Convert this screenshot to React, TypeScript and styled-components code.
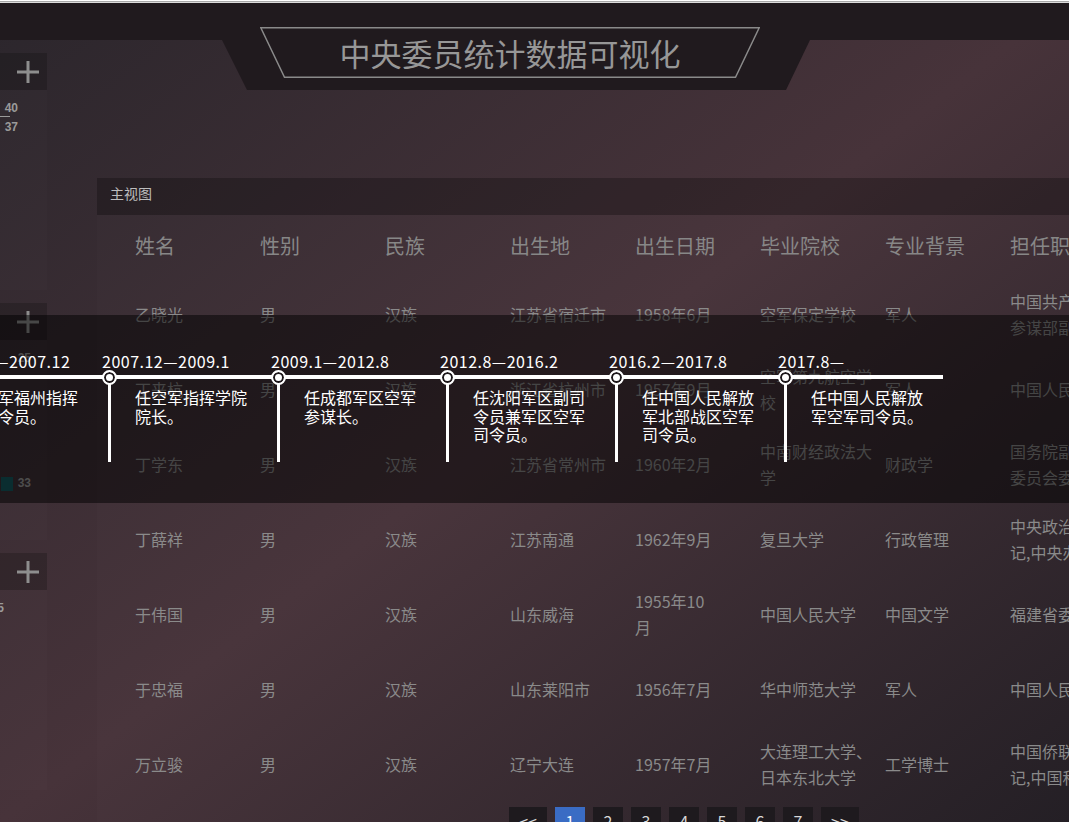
import React from "react";
import styled, { createGlobalStyle } from "styled-components";

const GlobalStyle = createGlobalStyle`
  html, body { margin: 0; padding: 0; width: 100%; height: 100%; overflow: hidden; }
  body { font-family: "Noto Sans CJK SC", "Microsoft YaHei", sans-serif; background: #2b262c; }
  #root { width: 100%; height: 100%; }
  * { box-sizing: border-box; }
`;

const Page = styled.div`
  position: relative;
  width: 100vw;
  height: 100vh;
  overflow: hidden;
  display: flex;
  flex-direction: column;
  background: linear-gradient(to bottom right, #2b262c 0%, #47333a 50%, #221d23 100%);
`;

const TopStrip = styled.div`
  height: 3px;
  flex-shrink: 0;
  background: linear-gradient(#ffffff 0 1px, #a8a8a8 1px 2px, #dcdcdc 2px 3px);
`;

const Header = styled.header`
  height: 37px;
  flex-shrink: 0;
  background: #201a1e;
  padding-left: 222px;
  position: relative;
  z-index: 1;
`;

const TitleTab = styled.div`
  width: 588px;
  height: 87px;
  background: #201a1e;
  clip-path: polygon(0 0, 100% 0, 100% 37px, calc(100% - 24px) 100%, 25px 100%, 0 37px);
  padding: 24px 0 0 38px;
`;

const TitleFrame = styled.div`
  position: relative;
  width: 500px;
  height: 51px;
  display: flex;
  align-items: center;
  justify-content: center;
`;

const FrameSvg = styled.svg`
  position: absolute;
  inset: 0;
`;

const TitleText = styled.h1`
  margin: 0;
  position: relative;
  font-size: 31px;
  font-weight: 400;
  color: #979797;
  line-height: 1;
`;

const Body = styled.div`
  display: flex;
  align-items: flex-start;
  flex: 1;
  min-height: 0;
`;

const LeftColumn = styled.aside`
  width: 247px;
  margin-left: -200px;
  flex-shrink: 0;
  padding-top: 13px;
  display: flex;
  flex-direction: column;
  gap: 13px;
`;

const SidePanel = styled.section`
  height: 237px;
  display: flex;
  flex-direction: column;
  background: rgba(255, 255, 255, 0.012);
`;

const SideHead = styled.div`
  height: 37px;
  flex-shrink: 0;
  background: rgba(0, 0, 0, 0.22);
  display: flex;
  align-items: center;
  justify-content: flex-end;
  padding-right: 8px;
`;

const SideBody = styled.div<{ $pr: number }>`
  display: flex;
  flex-direction: column;
  align-items: flex-end;
  padding: 9px ${(p) => p.$pr}px 0 0;
`;

const SideValue = styled.div<{ $mt?: number; $underline?: boolean }>`
  position: relative;
  display: flex;
  align-items: center;
  gap: 5px;
  margin-top: ${(p) => p.$mt ?? 0}px;
  font-family: "Liberation Sans", "Noto Sans", sans-serif;
  font-size: 12px;
  font-weight: 700;
  line-height: 19px;
  color: #9a9a9a;
  &::before {
    content: "";
    display: ${(p) => (p.$underline ? "block" : "none")};
    position: absolute;
    left: -5px;
    bottom: 1px;
    width: 10px;
    height: 1px;
    background: #9a9a9a;
  }
`;

const Swatch = styled.span`
  width: 12px;
  height: 14px;
  background: #155a60;
`;

const MainPanel = styled.main`
  width: 1174px;
  flex-shrink: 0;
  margin-left: 50px;
  margin-top: 138px;
  background: rgba(255, 255, 255, 0.01);
`;

const PanelBar = styled.div`
  height: 37px;
  line-height: 31px;
  padding-left: 13px;
  font-size: 14px;
  color: #bdbdbd;
  background: rgba(0, 0, 0, 0.28);
`;

const TableGrid = styled.div`
  display: grid;
  grid-template-columns: repeat(7, 125px) 240px;
  padding-left: 38px;
`;

const HeadCell = styled.div`
  height: 61px;
  display: flex;
  align-items: center;
  font-size: 20px;
  color: #878787;
`;

const Cell = styled.div<{ $pr: number }>`
  height: 75px;
  display: flex;
  align-items: center;
  padding-right: ${(p) => p.$pr}px;
  font-size: 16px;
  line-height: 26px;
  color: #8a8a8a;
`;

const Pager = styled.nav`
  display: flex;
  justify-content: center;
  gap: 8px;
  margin-top: 6px;
`;

const PageBtn = styled.span<{ $active?: boolean }>`
  height: 28px;
  min-width: 30px;
  padding: 0 10px;
  display: flex;
  align-items: center;
  justify-content: center;
  font-size: 16px;
  color: ${(p) => (p.$active ? "#ffffff" : "#d8d8d8")};
  background: ${(p) => (p.$active ? "#3a6cc4" : "#1e1a1e")};
`;

const Overlay = styled.div`
  position: absolute;
  top: 315px;
  left: 0;
  right: 0;
  height: 188px;
  background: rgba(0, 0, 0, 0.5);
  z-index: 5;
  overflow: hidden;
`;

const Timeline = styled.div`
  display: flex;
  margin-left: -71px;
  padding-top: 36px;
`;

const TLItem = styled.div`
  width: 169px;
  flex-shrink: 0;
`;

const TLDate = styled.div`
  height: 20px;
  line-height: 20px;
  font-size: 16px;
  letter-spacing: 0.5px;
  color: #ffffff;
  padding-left: 4px;
  margin-bottom: 4px;
  white-space: nowrap;
`;

const TLTrack = styled.div`
  position: relative;
  border-top: 4px solid #ffffff;
  display: flex;
  align-items: flex-start;
`;

const TLNode = styled.span`
  position: absolute;
  left: 4px;
  top: -9.5px;
  width: 15px;
  height: 15px;
  border-radius: 50%;
  background: #ffffff;
  border: 2px solid #ffffff;
  box-shadow: inset 0 0 0 2px #1c1619;
`;

const TLStem = styled.span`
  margin-left: 10px;
  width: 3px;
  height: 83px;
  flex-shrink: 0;
  background: #ffffff;
`;

const TLDesc = styled.p`
  margin: 9px 0 0 24px;
  width: 114px;
  font-size: 16px;
  line-height: 18.5px;
  color: #ffffff;
`;

const PlusIcon = () => (
  <svg width="22" height="22" viewBox="0 0 22 22">
    <path d="M11 0V22M0 11H22" stroke="#8e8e8e" strokeWidth="3" fill="none" />
  </svg>
);

const headers = ["姓名", "性别", "民族", "出生地", "出生日期", "毕业院校", "专业背景", "担任职务"];
const colPad = [10, 10, 10, 10, 45, 7, 10, 15];

const rows: string[][] = [
  ["乙晓光", "男", "汉族", "江苏省宿迁市", "1958年6月", "空军保定学校", "军人", "中国共产党中央军事委员会联合参谋部副参谋长"],
  ["丁来杭", "男", "汉族", "浙江省杭州市", "1957年9月", "空军第九航空学校", "军人", "中国人民解放军空军司令员"],
  ["丁学东", "男", "汉族", "江苏省常州市", "1960年2月", "中南财经政法大学", "财政学", "国务院副秘书长、国家改革发展委员会委员"],
  ["丁薛祥", "男", "汉族", "江苏南通", "1962年9月", "复旦大学", "行政管理", "中央政治局委员,中央书记处书记,中央办公厅主任"],
  ["于伟国", "男", "汉族", "山东威海", "1955年10月", "中国人民大学", "中国文学", "福建省委书记"],
  ["于忠福", "男", "汉族", "山东莱阳市", "1956年7月", "华中师范大学", "军人", "中国人民解放军空军政治委员"],
  ["万立骏", "男", "汉族", "辽宁大连", "1957年7月", "大连理工大学、日本东北大学", "工学博士", "中国侨联主席、中国侨联党组书记,中国科学院院士"],
];

const timeline = [
  { date: "2005.12—2007.12", desc: "任空军福州指挥所司令员。" },
  { date: "2007.12—2009.1", desc: "任空军指挥学院院长。" },
  { date: "2009.1—2012.8", desc: "任成都军区空军参谋长。" },
  { date: "2012.8—2016.2", desc: "任沈阳军区副司令员兼军区空军司令员。" },
  { date: "2016.2—2017.8", desc: "任中国人民解放军北部战区空军司令员。" },
  { date: "2017.8—", desc: "任中国人民解放军空军司令员。" },
];

export default function App() {
  return (
    <Page>
      <GlobalStyle />
      <TopStrip />
      <Header>
        <TitleTab>
          <TitleFrame>
            <FrameSvg width="500" height="51" viewBox="0 0 500 51">
              <polygon points="0.8,0.8 499.2,0.8 475.5,50.2 24.5,50.2" fill="none" stroke="#8a8a8a" strokeWidth="1.5" />
            </FrameSvg>
            <TitleText>中央委员统计数据可视化</TitleText>
          </TitleFrame>
        </TitleTab>
      </Header>
      <Body>
        <LeftColumn>
          <SidePanel>
            <SideHead>
              <PlusIcon />
            </SideHead>
            <SideBody $pr={29}>
              <SideValue $underline>40</SideValue>
              <SideValue>37</SideValue>
            </SideBody>
          </SidePanel>
          <SidePanel>
            <SideHead>
              <PlusIcon />
            </SideHead>
            <SideBody $pr={16}>
              <SideValue>25</SideValue>
              <SideValue $mt={106}>
                <Swatch />
                33
              </SideValue>
            </SideBody>
          </SidePanel>
          <SidePanel>
            <SideHead>
              <PlusIcon />
            </SideHead>
            <SideBody $pr={43}>
              <SideValue>15</SideValue>
            </SideBody>
          </SidePanel>
        </LeftColumn>
        <MainPanel>
          <PanelBar>主视图</PanelBar>
          <TableGrid>
            {headers.map((h) => (
              <HeadCell key={h}>{h}</HeadCell>
            ))}
            {rows.map((r, ri) =>
              r.map((c, ci) => (
                <Cell key={`${ri}-${ci}`} $pr={colPad[ci]}>
                  {c}
                </Cell>
              ))
            )}
          </TableGrid>
          <Pager>
            <PageBtn>&lt;&lt;</PageBtn>
            {[1, 2, 3, 4, 5, 6, 7].map((n) => (
              <PageBtn key={n} $active={n === 1}>
                {n}
              </PageBtn>
            ))}
            <PageBtn>&gt;&gt;</PageBtn>
          </Pager>
        </MainPanel>
      </Body>
      <Overlay>
        <Timeline>
          {timeline.map((t) => (
            <TLItem key={t.date}>
              <TLDate>{t.date}</TLDate>
              <TLTrack>
                <TLNode />
                <TLStem />
                <TLDesc>{t.desc}</TLDesc>
              </TLTrack>
            </TLItem>
          ))}
        </Timeline>
      </Overlay>
    </Page>
  );
}
